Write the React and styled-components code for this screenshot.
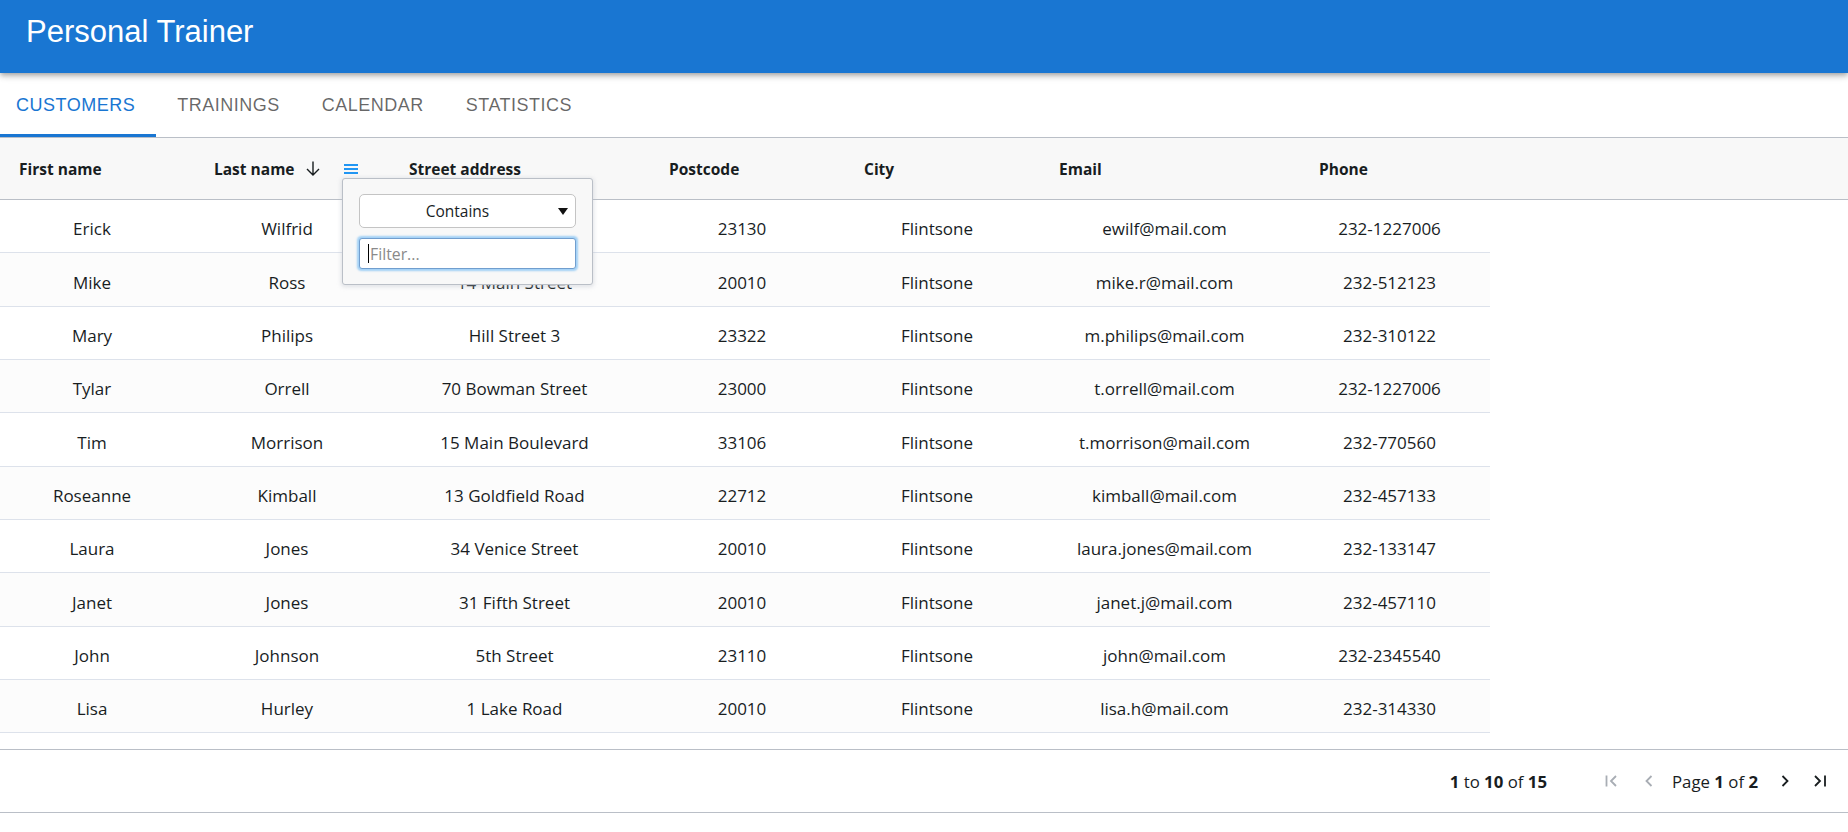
import React from "react";
import styled, { createGlobalStyle } from "styled-components";

const GlobalStyle = createGlobalStyle`
    body {
        margin: 0;
        background: #ffffff;
        font-family: "Liberation Sans", Arial, sans-serif;
    }
`

const AppBar = styled.header`
    position: relative;
    z-index: 2;
    height: 73px;
    box-sizing: border-box;
    background-color: #1976d2;
    display: flex;
    align-items: center;
    padding: 0 0 9px 26px;
    box-shadow: 0 2px 4px -1px rgba(0,0,0,.2), 0 4px 5px 0 rgba(0,0,0,.14), 0 1px 10px 0 rgba(0,0,0,.12);
`

const Titulo = styled.h1`
    margin: 0;
    color: #ffffff;
    font-family: "Liberation Sans", Arial, sans-serif;
    font-size: 31px;
    font-weight: 400;
`

const TabBar = styled.nav`
    display: flex;
    height: 64px;
`

const Tab = styled.button`
    position: relative;
    border: none;
    background: none;
    padding: 0 21px;
    font-family: "Liberation Sans", Arial, sans-serif;
    font-size: 18px;
    letter-spacing: .5px;
    text-transform: uppercase;
    color: ${p => p.$ativo ? "#1976d2" : "rgba(0,0,0,.6)"};

    &:first-child {
        padding-left: 16px;
    }

    &::after {
        content: "";
        position: absolute;
        left: 0;
        right: 0;
        bottom: 0;
        height: 3px;
        background: ${p => p.$ativo ? "#1976d2" : "transparent"};
    }
`

const Grade = styled.section`
    position: relative;
    border-top: 1px solid #babfc7;
    border-bottom: 1px solid #babfc7;
    font-family: "Open Sans", "Noto Sans", sans-serif;
    color: #181d1f;
`

const Cabecalho = styled.div`
    display: flex;
    height: 61px;
    background: #f8f8f8;
    border-bottom: 1px solid #babfc7;
`

const CelulaCabecalho = styled.div`
    box-sizing: border-box;
    width: ${p => p.$largura}px;
    flex: none;
    display: flex;
    align-items: center;
    padding-left: 19px;
    font-size: 15.5px;
    font-weight: 700;
`

const IconeOrdem = styled.svg`
    margin-left: 11px;
`

const IconeMenu = styled.svg`
    margin-left: auto;
    margin-right: 32px;
`

const Corpo = styled.div`
    height: 549px;
`

const Linha = styled.div`
    display: flex;
    width: 1490px;
    height: 53.35px;
    box-sizing: border-box;
    background: ${p => p.$impar ? "#fcfcfc" : "#ffffff"};
    border-bottom: 1px solid #dde2eb;
`

const Celula = styled.div`
    box-sizing: border-box;
    width: ${p => p.$largura}px;
    flex: none;
    display: flex;
    align-items: center;
    justify-content: center;
    padding: 5px 19px 0 8px;
    font-size: 17px;
    white-space: nowrap;
`

const Paginacao = styled.div`
    display: flex;
    align-items: center;
    justify-content: flex-end;
    height: 62px;
    border-top: 1px solid #babfc7;
    padding-right: 17px;
    font-size: 16.8px;
`

const Resumo = styled.span`
    margin-right: 54px;
`

const BotaoPagina = styled.span`
    width: 22px;
    display: flex;
    justify-content: center;
    margin-right: ${p => p.$margem}px;
    color: ${p => p.$desativado ? "#a8adb4" : "#181d1f"};
`

const TextoPagina = styled.span`
    margin-right: 16px;
`

const Popup = styled.div`
    position: absolute;
    left: 342px;
    top: 40px;
    width: 251px;
    height: 107px;
    box-sizing: border-box;
    padding: 15px 16px 0;
    background: #f8f8f8;
    border: 1px solid #babfc7;
    border-radius: 3px;
    box-shadow: 0 1px 4px 1px rgba(186,191,199,.4);
    display: flex;
    flex-direction: column;
    gap: 10px;
`

const Selecao = styled.div`
    position: relative;
    height: 34px;
    box-sizing: border-box;
    background: #ffffff;
    border: 1px solid #c4c4c4;
    border-radius: 5px;
    display: flex;
    align-items: center;
    justify-content: center;
    padding-right: 20px;
    font-size: 15.5px;
    color: #181d1f;

    &::after {
        content: "";
        position: absolute;
        right: 7px;
        top: 13px;
        border-left: 5.5px solid transparent;
        border-right: 5.5px solid transparent;
        border-top: 7px solid #111;
    }
`

const Entrada = styled.div`
    height: 31px;
    box-sizing: border-box;
    background: #ffffff;
    border: 1px solid #719ece;
    border-radius: 3px;
    box-shadow: 0 0 2px 1.5px rgba(33,150,243,.4);
    display: flex;
    align-items: center;
    padding-left: 8px;
    font-size: 15.8px;
    color: #8a8a8a;

    &::before {
        content: "";
        width: 1px;
        height: 19px;
        background: #000;
        margin-right: 1px;
    }
`

const colunas = [
    { titulo: "First name", largura: 195 },
    { titulo: "Last name", largura: 195, ordenada: true },
    { titulo: "Street address", largura: 260 },
    { titulo: "Postcode", largura: 195 },
    { titulo: "City", largura: 195 },
    { titulo: "Email", largura: 260 },
    { titulo: "Phone", largura: 190 },
]

// a rua da primeira linha fica escondida pelo filtro aberto
const clientes = [
    ["Erick", "Wilfrid", "", "23130", "Flintsone", "ewilf@mail.com", "232-1227006"],
    ["Mike", "Ross", "14 Main Street", "20010", "Flintsone", "mike.r@mail.com", "232-512123"],
    ["Mary", "Philips", "Hill Street 3", "23322", "Flintsone", "m.philips@mail.com", "232-310122"],
    ["Tylar", "Orrell", "70 Bowman Street", "23000", "Flintsone", "t.orrell@mail.com", "232-1227006"],
    ["Tim", "Morrison", "15 Main Boulevard", "33106", "Flintsone", "t.morrison@mail.com", "232-770560"],
    ["Roseanne", "Kimball", "13 Goldfield Road", "22712", "Flintsone", "kimball@mail.com", "232-457133"],
    ["Laura", "Jones", "34 Venice Street", "20010", "Flintsone", "laura.jones@mail.com", "232-133147"],
    ["Janet", "Jones", "31 Fifth Street", "20010", "Flintsone", "janet.j@mail.com", "232-457110"],
    ["John", "Johnson", "5th Street", "23110", "Flintsone", "john@mail.com", "232-2345540"],
    ["Lisa", "Hurley", "1 Lake Road", "20010", "Flintsone", "lisa.h@mail.com", "232-314330"],
]

const Seta = ({ d }) => (
    <svg width="14" height="12" viewBox="0 0 14 12" fill="none" stroke="currentColor" strokeWidth="1.8">
        <path d={d} />
    </svg>
)

const App = () => {
    return (
        <>
            <GlobalStyle />
            <AppBar>
                <Titulo>Personal Trainer</Titulo>
            </AppBar>
            <TabBar>
                <Tab $ativo>Customers</Tab>
                <Tab>Trainings</Tab>
                <Tab>Calendar</Tab>
                <Tab>Statistics</Tab>
            </TabBar>
            <Grade>
                <Cabecalho>
                    {colunas.map(c => (
                        <CelulaCabecalho key={c.titulo} $largura={c.largura}>
                            {c.titulo}
                            {c.ordenada && (
                                <IconeOrdem width="14" height="15" viewBox="0 0 14 15" fill="none" stroke="#181d1f" strokeWidth="1.4">
                                    <path d="M7 0.5 V14 M1 8 L7 14 L13 8" />
                                </IconeOrdem>
                            )}
                            {c.ordenada && (
                                <IconeMenu width="14" height="12" viewBox="0 0 14 12" fill="#2196f3">
                                    <rect x="0" y="1" width="14" height="2" />
                                    <rect x="0" y="5" width="14" height="2" />
                                    <rect x="0" y="9" width="14" height="2" />
                                </IconeMenu>
                            )}
                        </CelulaCabecalho>
                    ))}
                </Cabecalho>
                <Corpo>
                    {clientes.map((linha, i) => (
                        <Linha key={i} $impar={i % 2 === 1}>
                            {linha.map((valor, j) => (
                                <Celula key={j} $largura={colunas[j].largura}>{valor}</Celula>
                            ))}
                        </Linha>
                    ))}
                </Corpo>
                <Paginacao>
                    <Resumo><b>1</b> to <b>10</b> of <b>15</b></Resumo>
                    <BotaoPagina $desativado $margem={15}>
                        <Seta d="M1.5 0.5 V11.5 M11 1 L6 6 L11 11" />
                    </BotaoPagina>
                    <BotaoPagina $desativado $margem={12}>
                        <Seta d="M9.5 1 L4.5 6 L9.5 11" />
                    </BotaoPagina>
                    <TextoPagina>Page <b>1</b> of <b>2</b></TextoPagina>
                    <BotaoPagina $margem={13}>
                        <Seta d="M4.5 1 L9.5 6 L4.5 11" />
                    </BotaoPagina>
                    <BotaoPagina $margem={0}>
                        <Seta d="M2 1 L7 6 L2 11 M12 0.5 V11.5" />
                    </BotaoPagina>
                </Paginacao>
                <Popup>
                    <Selecao>Contains</Selecao>
                    <Entrada>Filter...</Entrada>
                </Popup>
            </Grade>
        </>
    );
}

export default App
